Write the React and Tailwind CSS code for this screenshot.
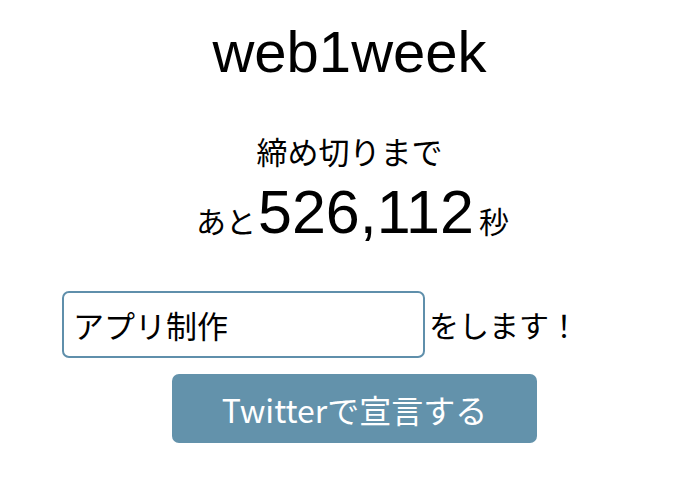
export default function App() {
  const jp = { fontFamily: '"Noto Sans CJK JP", "Noto Sans", sans-serif' };
  return (
    <div className="w-[699px] h-[477px] bg-white flex flex-col items-center text-black" style={jp}>
      <h1 className="mt-[18px] text-[58px] leading-[68px] font-normal" style={{ fontFamily: '"Liberation Sans", sans-serif' }}>
        web1week
      </h1>
      <p className="mt-[45px] text-[31px] leading-[40px]">締め切りまで</p>
      <p className="mt-[11px] flex items-baseline leading-[60px] ml-[6px]">
        <span className="text-[30px]">あと</span>
        <span className="text-[61px] ml-[2px]" style={{ fontFamily: '"Liberation Sans", sans-serif' }}>526,112</span>
        <span className="text-[30px] ml-[5px]">秒</span>
      </p>
      <div className="mt-[41px] flex items-center self-start ml-[62px]">
        <input
          defaultValue="アプリ制作"
          className="w-[363px] h-[67px] border-2 border-[#5f8fab] rounded-[7px] px-[9px] text-[31px] outline-none"
          style={jp}
        />
        <span className="ml-[4px] text-[30px]">をします！</span>
      </div>
      <button className="mt-[16px] self-start ml-[172px] w-[365px] h-[69px] bg-[#6392ab] rounded-[7px] text-white text-[32px]">
        Twitterで宣言する
      </button>
    </div>
  );
}
